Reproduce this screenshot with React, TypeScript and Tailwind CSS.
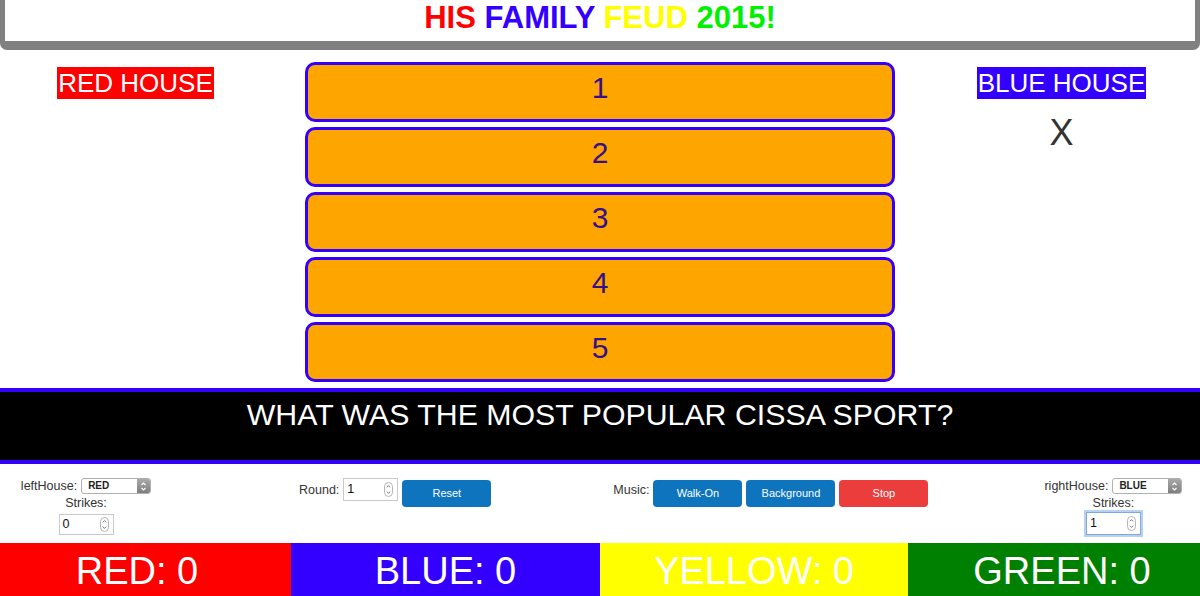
import React from "react";

const BLUE = "#3300ff";

function SelectBox({ value }: { value: string }) {
  return (
    <div className="flex h-[16px] w-[70px] shrink-0 overflow-hidden rounded-[3px] border border-[#b0b0b0] bg-white">
      <div className="flex flex-1 items-center pl-[6px] text-[10px] font-semibold leading-none text-[#222]">{value}</div>
      <div className="flex w-[13px] items-center justify-center bg-gradient-to-b from-[#a8a8a8] to-[#7f7f7f]">
        <svg width="7" height="11" viewBox="0 0 7 11">
          <path d="M1.5 4 L3.5 2 L5.5 4" fill="none" stroke="#fff" strokeWidth="1.1" />
          <path d="M1.5 7 L3.5 9 L5.5 7" fill="none" stroke="#fff" strokeWidth="1.1" />
        </svg>
      </div>
    </div>
  );
}

function Spinner() {
  return (
    <svg width="9" height="15" viewBox="0 0 9 15">
      <rect x="0.5" y="0.5" width="8" height="14" rx="4" fill="#fff" stroke="#b5b5b5" />
      <path d="M2.8 5.3 L4.5 3.6 L6.2 5.3" fill="none" stroke="#666" strokeWidth="0.9" />
      <path d="M2.8 9.7 L4.5 11.4 L6.2 9.7" fill="none" stroke="#666" strokeWidth="0.9" />
    </svg>
  );
}

function NumInput({ value, focused, h }: { value: string; focused?: boolean; h: string }) {
  return (
    <div
      className={
        "flex w-[55px] shrink-0 items-center justify-between border bg-white pl-[3px] pr-[4px] text-[12.5px] text-[#111] " +
        h +
        (focused ? " border-[#7fa9dc] shadow-[0_0_0_2px_#b7d2f1]" : " border-[#c9c9c9]")
      }
    >
      <span>{value}</span>
      <Spinner />
    </div>
  );
}

function Btn({ label, red }: { label: string; red?: boolean }) {
  return (
    <div
      className={
        "flex h-[27px] w-[89px] shrink-0 items-center justify-center rounded-[4px] text-[11px] text-white " +
        (red ? "bg-[#ec3d3d]" : "bg-[#0d74bd]")
      }
    >
      {label}
    </div>
  );
}

export default function App() {
  const answers = ["1", "2", "3", "4", "5"];
  return (
    <div className="h-[596px] w-[1200px] overflow-hidden bg-white font-['Liberation_Sans',Arial,sans-serif]">
      {/* header */}
      <div className="h-[50px] rounded-b-[7px] border-x-[5px] border-b-[9px] border-[#808080] bg-white">
        <div className="pt-[2px] text-center text-[31px] font-bold leading-[31px]">
          <span className="text-[#ff0000]">HIS</span>{" "}
          <span className="text-[#3300ff]">FAMILY</span>{" "}
          <span className="text-[#ffff00]">FEUD</span>{" "}
          <span className="text-[#00f000]">2015!</span>
        </div>
      </div>

      {/* main row */}
      <div className="flex pt-[12px]">
        <div className="flex w-[271px] shrink-0 flex-col items-center pt-[5px]">
          <div className="inline-block bg-[#ff0000] px-[1px] text-[26px] leading-[32px] text-white">RED HOUSE</div>
        </div>
        <div className="ml-[34px] flex w-[590px] shrink-0 flex-col gap-[5px]">
          {answers.map((a) => (
            <div
              key={a}
              className="h-[60px] rounded-[10px] border-[3px] border-[#3300ff] bg-[#ffa500] pt-[8px] text-center text-[30px] leading-[30px] text-[#35108a]"
            >
              {a}
            </div>
          ))}
        </div>
        <div className="ml-[28px] flex flex-1 flex-col items-center pt-[5px]">
          <div className="inline-block bg-[#3300ff] px-[1px] text-[26px] leading-[32px] text-white">BLUE HOUSE</div>
          <div className="mt-[16px] text-[36px] leading-[36px] text-[#333]">X</div>
        </div>
      </div>

      {/* question */}
      <div
        className="mt-[6px] h-[76px] border-y-4 bg-black pt-[6px] text-center text-[30.3px] leading-[34px] text-white"
        style={{ borderColor: BLUE }}
      >
        WHAT WAS THE MOST POPULAR CISSA SPORT?
      </div>

      {/* controls */}
      <div className="flex h-[79px] items-start pt-[14px] text-[12.5px] leading-[15px] text-[#333]">
        <div className="ml-[21px] flex w-[130px] shrink-0 flex-col items-center">
          <div className="flex items-center gap-[4px]">
            <span>leftHouse:</span>
            <SelectBox value="RED" />
          </div>
          <div className="mt-[2px]">Strikes:</div>
          <div className="mt-[3px]">
            <NumInput value="0" h="h-[21px]" />
          </div>
        </div>

        <div className="ml-[148px] flex shrink-0 items-start">
          <span className="mt-[5px]">Round:</span>
          <div className="ml-[4px]">
            <NumInput value="1" h="h-[23px]" />
          </div>
          <div className="ml-[4px] mt-[2px]">
            <Btn label="Reset" />
          </div>
        </div>

        <div className="ml-[122px] flex shrink-0 items-start">
          <span className="mt-[5px]">Music:</span>
          <div className="ml-[4px] mt-[2px] flex gap-[4px]">
            <Btn label="Walk-On" />
            <Btn label="Background" />
            <Btn label="Stop" red />
          </div>
        </div>

        <div className="ml-[116px] flex shrink-0 flex-col items-center">
          <div className="flex items-center gap-[4px]">
            <span>rightHouse:</span>
            <SelectBox value="BLUE" />
          </div>
          <div className="mt-[2px]">Strikes:</div>
          <div className="mt-[1px]">
            <NumInput value="1" focused h="h-[23px]" />
          </div>
        </div>
      </div>

      {/* scores */}
      <div className="flex h-[53px] text-[38px] leading-[38px] text-white">
        <div className="flex w-[291px] items-center justify-center bg-[#ff0000] pr-[17px] pt-[2px]">RED: 0</div>
        <div className="flex w-[309px] items-center justify-center bg-[#3300ff] pt-[2px]">BLUE: 0</div>
        <div className="flex w-[308px] items-center justify-center bg-[#ffff00] pt-[2px]">YELLOW: 0</div>
        <div className="flex w-[292px] items-center justify-center bg-[#008000] pl-[16px] pt-[2px]">GREEN: 0</div>
      </div>
    </div>
  );
}
